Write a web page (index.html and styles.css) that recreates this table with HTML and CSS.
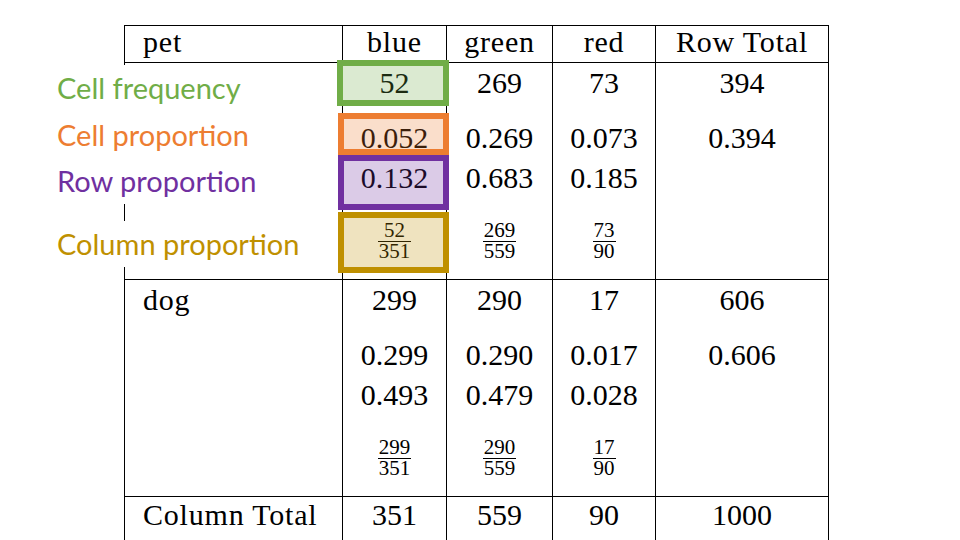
FILE: index.html
```html
<!DOCTYPE html>
<html>
<head>
<meta charset="utf-8">
<link rel="stylesheet" href="styles.css">
</head>
<body>
<div class="slide">
  <div class="ctable">
    <div class="cell head first"><span class="word">pet</span></div>
    <div class="cell head"><span class="word">blue</span></div>
    <div class="cell head"><span class="word">green</span></div>
    <div class="cell head"><span class="word">red</span></div>
    <div class="cell head"><span class="word">Row Total</span></div>

    <div class="cell first"></div>
    <div class="cell">
      <div class="v1">52</div><div class="v2">0.052</div><div class="v3">0.132</div>
      <div class="v4"><span class="frac"><span class="num">52</span><span class="den">351</span></span></div>
    </div>
    <div class="cell">
      <div class="v1">269</div><div class="v2">0.269</div><div class="v3">0.683</div>
      <div class="v4"><span class="frac"><span class="num">269</span><span class="den">559</span></span></div>
    </div>
    <div class="cell">
      <div class="v1">73</div><div class="v2">0.073</div><div class="v3">0.185</div>
      <div class="v4"><span class="frac"><span class="num">73</span><span class="den">90</span></span></div>
    </div>
    <div class="cell">
      <div class="v1">394</div><div class="v2">0.394</div>
    </div>

    <div class="cell first"><div class="v1"><span class="word">dog</span></div></div>
    <div class="cell">
      <div class="v1">299</div><div class="v2">0.299</div><div class="v3">0.493</div>
      <div class="v4"><span class="frac"><span class="num">299</span><span class="den">351</span></span></div>
    </div>
    <div class="cell">
      <div class="v1">290</div><div class="v2">0.290</div><div class="v3">0.479</div>
      <div class="v4"><span class="frac"><span class="num">290</span><span class="den">559</span></span></div>
    </div>
    <div class="cell">
      <div class="v1">17</div><div class="v2">0.017</div><div class="v3">0.028</div>
      <div class="v4"><span class="frac"><span class="num">17</span><span class="den">90</span></span></div>
    </div>
    <div class="cell">
      <div class="v1">606</div><div class="v2">0.606</div>
    </div>

    <div class="cell total first"><span class="word">Column Total</span></div>
    <div class="cell total">351</div>
    <div class="cell total">559</div>
    <div class="cell total">90</div>
    <div class="cell total">1000</div>
  </div>

  <div class="legend legend-top">
    <div class="lab lab-green">Cell frequency</div>
    <div class="lab lab-orange">Cell proportion</div>
    <div class="lab lab-purple">Row proportion</div>
  </div>
  <div class="legend legend-col">
    <div class="lab lab-gold">Column proportion</div>
  </div>

  <div class="hl hl-green"></div>
  <div class="hl hl-orange"></div>
  <div class="hl hl-purple"></div>
  <div class="hl hl-gold"></div>
</div>
</body>
</html>
```

FILE: styles.css
```css
html, body {
  margin: 0;
  padding: 0;
  background: #ffffff;
}

.slide {
  position: relative;
  width: 960px;
  height: 540px;
  overflow: hidden;
  background: #ffffff;
  box-sizing: border-box;
  padding: 25px 0 0 124px;
}

.ctable {
  display: grid;
  grid-template-columns: 217px 103px 105px 102px 172px;
  grid-template-rows: 36px 216px 216px 60px;
  gap: 1px;
  padding: 1px;
  width: max-content;
  background: #000000;
  font-family: "Liberation Serif", "Times New Roman", serif;
  font-size: 30px;
  color: #000000;
}

.cell {
  background: #ffffff;
  text-align: center;
}

.cell.first {
  text-align: left;
  padding-left: 18px;
}

.word {
  letter-spacing: 0.8px;
}

.head {
  line-height: 32px;
}

.total {
  line-height: 36px;
}

.v1 {
  height: 40px;
  line-height: 40px;
}

.v2 {
  margin-top: 15px;
  height: 40px;
  line-height: 40px;
}

.v3 {
  height: 40px;
  line-height: 40px;
}

.v4 {
  margin-top: 22px;
  display: flex;
  justify-content: center;
}

.frac {
  display: inline-flex;
  flex-direction: column;
  align-items: stretch;
  font-size: 21px;
  text-align: center;
}

.num {
  line-height: 21px;
  padding: 0 1px;
  border-bottom: 1px solid #000000;
}

.den {
  line-height: 19px;
  padding: 0 1px;
}

.legend {
  position: absolute;
  left: 50px;
  background: #ffffff;
  padding-left: 7px;
  padding-right: 6px;
  font-family: Lato, "Open Sans", sans-serif;
  font-size: 29px;
}

.legend-top {
  top: 65px;
}

.legend-col {
  top: 221px;
}

.lab {
  height: 46px;
  line-height: 46px;
  white-space: nowrap;
}

.lab-green { color: #70ad47; }
.lab-orange { color: #ed7d31; margin-top: 1px; }
.lab-purple { color: #7030a0; }
.lab-gold { color: #bf9000; }

.hl {
  position: absolute;
  box-sizing: border-box;
  border: 6px solid;
}

.hl-green {
  left: 337px;
  top: 60px;
  width: 112px;
  height: 46px;
  border-color: #70ad47;
  background: rgba(112, 173, 71, 0.25);
}

.hl-orange {
  left: 338px;
  top: 113px;
  width: 111px;
  height: 42px;
  border-color: #ed7d31;
  background: rgba(237, 125, 49, 0.25);
}

.hl-purple {
  left: 338px;
  top: 155px;
  width: 111px;
  height: 55px;
  border-color: #7030a0;
  background: rgba(112, 48, 160, 0.25);
}

.hl-gold {
  left: 338px;
  top: 212px;
  width: 111px;
  height: 61px;
  border-color: #bf9000;
  background: rgba(191, 144, 0, 0.25);
}
```
